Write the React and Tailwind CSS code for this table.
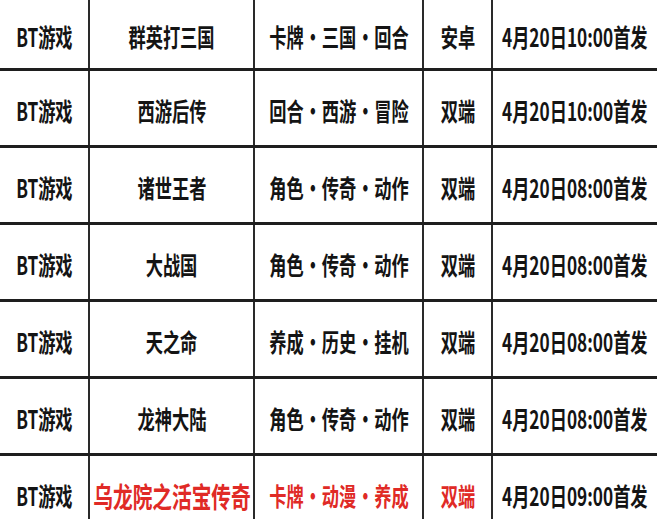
import React from "react";

const rows = [
  ["BT游戏", "群英打三国", "卡牌·三国·回合", "安卓", "4月20日10:00首发", false],
  ["BT游戏", "西游后传", "回合·西游·冒险", "双端", "4月20日10:00首发", false],
  ["BT游戏", "诸世王者", "角色·传奇·动作", "双端", "4月20日08:00首发", false],
  ["BT游戏", "大战国", "角色·传奇·动作", "双端", "4月20日08:00首发", false],
  ["BT游戏", "天之命", "养成·历史·挂机", "双端", "4月20日08:00首发", false],
  ["BT游戏", "龙神大陆", "角色·传奇·动作", "双端", "4月20日08:00首发", false],
  ["BT游戏", "乌龙院之活宝传奇", "卡牌·动漫·养成", "双端", "4月20日09:00首发", true],
];

function Tags({ text }) {
  const parts = text.split("·");
  return (
    <>
      {parts.map((p, i) => (
        <React.Fragment key={i}>
          {i > 0 && <span className="inline-block w-[22px] text-center">·</span>}
          {p}
        </React.Fragment>
      ))}
    </>
  );
}

function Cell({ w, children, red, border, big }) {
  return (
    <div
      className={`${w} shrink-0 h-full flex items-center justify-center pt-[5px] ${border ? "border-l-2 border-[#2a2a2a]" : ""}`}
    >
      <span
        className={`inline-block whitespace-nowrap font-semibold leading-none scale-x-[0.82] scale-y-[1.2] ${big ? "text-[24px]" : "text-[21px]"} ${red ? "text-[#e02a26]" : "text-[#141414]"}`}
      >
        {children}
      </span>
    </div>
  );
}

export default function App() {
  return (
    <div
      className="w-[657px] h-[519px] overflow-hidden bg-white flex flex-col"
      style={{ fontFamily: '"Noto Sans CJK SC", "Noto Sans", sans-serif' }}
    >
      {rows.map((r, i) => (
        <div
          key={i}
          className={`flex shrink-0 ${i === 0 ? "h-[68px]" : "h-[77px] border-t-[3px] border-[#1e1e1e]"}`}
        >
          <Cell w="w-[88px]">{r[0]}</Cell>
          <Cell w="w-[165px]" border red={r[5]} big={r[5]}>{r[1]}</Cell>
          <Cell w="w-[169px]" border red={r[5]}>
            <Tags text={r[2]} />
          </Cell>
          <Cell w="w-[69px]" border red={r[5]}>{r[3]}</Cell>
          <Cell w="w-[166px]" border>{r[4]}</Cell>
        </div>
      ))}
    </div>
  );
}
